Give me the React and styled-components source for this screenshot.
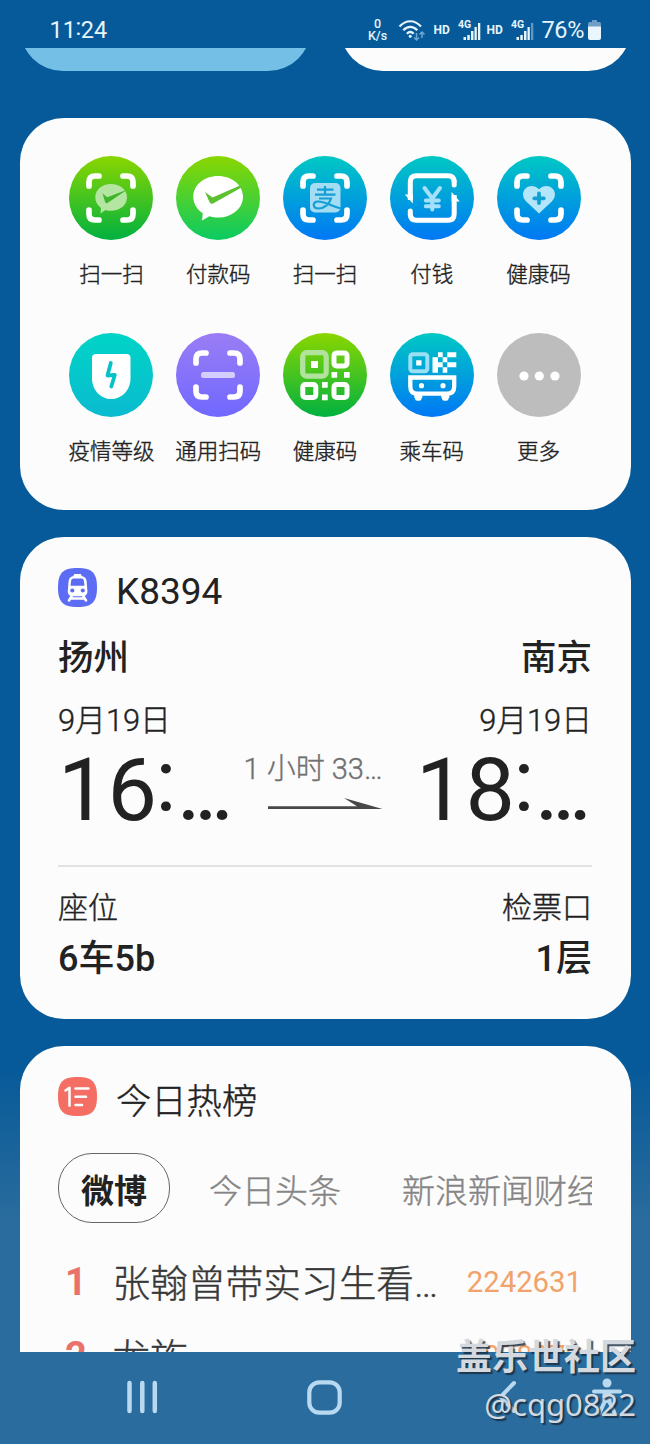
import styled, { createGlobalStyle, css } from 'styled-components';

const colors = {
  card: '#fcfcfc',
  text: '#222222',
  muted: '#858585',
  nav: '#b9d9f0',
};

// light text with a hairline outline, sits between light and regular
const softText = css`
  font-weight: 300;
  -webkit-text-stroke: 0.4px currentColor;
`;

const GlobalStyle = createGlobalStyle`
  * {
    box-sizing: border-box;
  }
  body {
    margin: 0;
    font-family: Roboto, 'Noto Sans CJK SC', sans-serif;
    color: ${colors.text};
  }
  svg {
    display: block;
    flex-shrink: 0;
  }
`;

const Screen = styled.div`
  position: relative;
  width: 650px;
  height: 1444px;
  display: flex;
  flex-direction: column;
  overflow: hidden;
  background: linear-gradient(#075a99 1070px, #2a6c9d 1220px);
`;

const StatusBar = styled.header`
  height: 48px;
  flex-shrink: 0;
  display: flex;
  align-items: center;
  justify-content: space-between;
  padding: 12px 49px 0 49.5px;
  color: #e6f5fc;
`;

const Clock = styled.span`
  font-size: 23.5px;
  line-height: 36px;
`;

const Colon = styled.span`
  line-height: 0;
  vertical-align: 0.11em;
  margin: 0 -0.02em;
`;

const StatusIcons = styled.div`
  display: flex;
  align-items: center;
`;

const Speed = styled.div`
  display: flex;
  flex-direction: column;
  align-items: center;
  width: 20px;
  margin-right: 10px;
  font-size: 12.5px;
  font-weight: 500;
  line-height: 12px;
`;

const Hd = styled.span`
  font-size: 12px;
  font-weight: 700;
  width: 17px;
  margin-left: ${({ $gap }) => $gap}px;
  margin-right: 7px;
`;

const Battery = styled.span`
  font-size: 23.5px;
  line-height: 36px;
  letter-spacing: -0.4px;
  margin: 0 4px 0 8px;
`;

const Feed = styled.main`
  height: 1304px;
  flex-shrink: 0;
  overflow: hidden;
  padding: 0 19.5px;
`;

const WidgetStrip = styled.div`
  height: 23px;
  overflow: hidden;
  display: flex;
  align-items: flex-end;
  justify-content: space-between;
`;

const Widget = styled.div`
  width: 291px;
  height: 120px;
  flex-shrink: 0;
  border-radius: 43px;
  background: ${({ $color }) => $color};
`;

const Card = styled.section`
  height: ${({ $height }) => $height}px;
  margin-top: ${({ $gap }) => $gap}px;
  padding: ${({ $top }) => $top}px 38.5px 0;
  border-radius: 44px;
  background: ${colors.card};
`;

const Shortcuts = styled.div`
  display: grid;
  grid-template-columns: repeat(5, 106.8px);
  grid-auto-rows: 177px;
  justify-content: center;
`;

const Shortcut = styled.div`
  display: flex;
  flex-direction: column;
  align-items: center;
  white-space: nowrap;
`;

const ShortcutLabel = styled.span`
  margin-top: 19px;
  font-size: 21.5px;
  line-height: 32px;
  ${softText}
`;

const CardHeader = styled.div`
  display: flex;
  align-items: center;
  gap: 19px;
  height: 40px;
`;

const CardTitle = styled.h2`
  margin: ${({ $drop }) => $drop}px 0 0;
  font-size: ${({ $size }) => $size}px;
  font-weight: 400;
  line-height: 40px;
  ${({ $soft }) => $soft && softText}
`;

const Row = styled.div`
  display: flex;
  align-items: center;
  justify-content: space-between;
  height: ${({ $height }) => $height}px;
  margin-top: ${({ $gap }) => $gap || 0}px;
`;

const Station = styled.span`
  font-size: 35.5px;
  font-weight: 500;
`;

const DateText = styled.span`
  font-size: 30.8px;
  ${softText}
`;

const Time = styled.span`
  font-size: 88px;
  line-height: 88px;
  width: 176px;
  white-space: nowrap;
`;

const Ellipsis = styled.span`
  margin-left: 3px;
  font-size: 77px;
  font-weight: 500;
  line-height: 0;
`;

const Duration = styled.div`
  display: flex;
  flex-direction: column;
  align-items: flex-end;
  gap: 9px;
  width: 165px;
  padding-right: 25px;
  margin-top: -22px;
  font-size: 29px;
  line-height: 40px;
  color: #707070;
  white-space: nowrap;
  ${softText}
`;

const Divider = styled.hr`
  height: 2px;
  margin: 31px 0 0;
  border: 0;
  background: #e2e2e2;
`;

const FieldLabel = styled.span`
  font-size: 30px;
  ${softText}
`;

const FieldValue = styled.span`
  font-size: 36px;
  font-weight: 500;
`;

const Tabs = styled.div`
  display: flex;
  align-items: center;
  height: 70px;
  margin-top: 37px;
  overflow: hidden;
  white-space: nowrap;
  font-size: 33px;
  color: ${colors.muted};
`;

const Tab = styled.span`
  flex-shrink: 0;
  margin-left: ${({ $gap }) => $gap}px;
  padding-top: 2px;
  ${softText}
`;

const ActiveTab = styled.span`
  display: flex;
  align-items: center;
  justify-content: center;
  flex-shrink: 0;
  width: 112px;
  height: 70px;
  padding-top: 2px;
  border: 1.5px solid #666;
  border-radius: 34px;
  font-weight: 700;
  color: ${colors.text};
`;

const HotList = styled.div`
  margin-top: 22px;
`;

const HotItem = styled.div`
  display: flex;
  align-items: center;
  height: 74px;
  white-space: nowrap;
`;

const Rank = styled.span`
  width: 36px;
  text-align: center;
  font-size: 38px;
  font-weight: 700;
  color: #e9736c;
`;

const HotTitle = styled.span`
  flex: 1;
  margin: -4px 0 0 18.5px;
  font-size: 37.7px;
  color: #383838;
  ${softText}
`;

const Heat = styled.span`
  margin: 0 10px 0 0;
  font-size: 29.3px;
  color: #f2a36b;
`;

const NavBar = styled.nav`
  height: 92px;
  flex-shrink: 0;
  display: flex;
  align-items: center;
  padding: 0 24px 2px 126px;
`;

const NavSlot = styled.div`
  margin-left: ${({ $gap }) => $gap}px;
`;

const Watermark = styled.div`
  position: absolute;
  right: 14px;
  bottom: 16px;
  display: flex;
  flex-direction: column;
  align-items: flex-end;
  color: #d3d9df;
  text-shadow: 2px 2px 1px rgba(25, 45, 65, 0.85);
  white-space: nowrap;
`;

const Community = styled.span`
  font-size: 36px;
  font-weight: 700;
  line-height: 44px;
`;

const Handle = styled.span`
  font-family: 'Noto Sans', sans-serif;
  font-size: 31px;
  line-height: 48px;
`;

const Wifi = () => (
  <svg width="28" height="24" viewBox="0 0 28 24" fill="none" stroke="#e6f5fc" strokeWidth="2.2">
    <path d="M1.5 8.5C8 1.5 16.500 1.500 23 8.500M5.300 12.300C9.600 7.800 15 7.800 19.300 12.300M8.800 15.700C11 13.500 13.500 13.500 15.700 15.700" />
    <circle cx="12.200" cy="18.300" r="1.500" fill="#e6f5fc" stroke="none" />
    <path stroke="#6fa6cf" strokeWidth="1.500" d="M18.500 15v7M16 19.500l2.500 2.500 2.500-2.500M24 20v-6M21.500 16.500l2.500-2.500 2.500 2.500" />
  </svg>
);

const Signal = ({ weak }) => (
  <svg width="23" height="22" viewBox="0 0 23 22" fill="#e6f5fc">
    <text x="0" y="9" fontSize="10.500" fontWeight="700">4G</text>
    <path d="M5.500 18h2.500v3h-2.500zM9.300 16h2.500v5h-2.500zM13 12h2.500v9h-2.500zM16.500 8h2.300v13h-2.300z" />
    <path d="M20 4h2.300v17h-2.300z" opacity={weak ? 0.4 : 1} />
  </svg>
);

const BatteryIcon = () => (
  <svg width="13" height="20" viewBox="0 0 13 20">
    <path fill="#6f9fc6" d="M4 0h5v2h2.500Q13 2 13 4v3H0V4Q0 2 1.500 2H4z" />
    <path fill="#e9f6ff" d="M0 6.500h13V18q0 2-2 2H2q-2 0-2-2z" />
  </svg>
);

const ScanFrame = () => (
  <path
    fill="none"
    stroke="#fff"
    strokeWidth="5.700"
    strokeLinecap="round"
    d="M20 30V26Q20 20 26 20h4M54 20H58q6 0 6 6v4M64 54V58q0 6-6 6h-4M30 64H26q-6 0-6-6v-4"
  />
);

const WechatScan = () => (
  <>
    <ScanFrame />
    <path
      fill="#b5e5a3"
      d="M42 28c9 0 16 5.500 16 13.300S51 54.800 42 54.800c-2 0-3.800-.3-5.500-.9L31.500 57.500 32 52C28.500 49.500 26.300 45.700 26.300 41.300 26.300 33.500 33 28 42 28z"
    />
    <path fill="#3fb52a" d="M33.500 37.500l4.800 3.800L58 33.800 38.500 47q-1.500 1-2.300-.8z" />
  </>
);

const WechatPay = () => (
  <>
    <path
      fill="#fff"
      d="M42 20c14 0 25 9 25 20.700S56 61.500 42 61.500c-3 0-6-.4-8.600-1.200L26 64.500l.8-7.300C21 53.500 17.300 47.500 17.300 40.700 17.300 29 28 20 42 20z"
    />
    <path fill="#5cc131" d="M29 36l7.500 5.500L64 29.500l1 2.200L37.500 47.200q-2.800 1.500-4-1.200z" />
  </>
);

const AlipayScan = () => (
  <>
    <ScanFrame />
    <rect x="27" y="27" width="30.500" height="29.500" rx="5" fill="#a3dcf3" />
    <path
      fill="none"
      stroke="#149ed6"
      strokeWidth="2.200"
      d="M34 33.700H50.500M32 38.700H52.500M42 30v8.500M36 42.500H48C46.500 48 41 52.500 35.500 52.500 29.500 52.500 29 45.500 35 45.500 42 45.500 48 50 58 52.500"
    />
  </>
);

const YenPay = () => (
  <>
    <g fill="none" stroke="#fff" strokeWidth="5" strokeLinecap="round">
      <path strokeLinecap="butt" d="M20.300 44V26q0-6.200 6.200-6.200H58q6.200 0 6.200 6.200" />
      <path d="M64.200 25v4" />
      <path strokeLinecap="butt" d="M64.200 39V58q0 6.200-6.200 6.200H26.500q-6.200 0-6.200-6.200" />
      <path d="M20.300 58.500V55" />
    </g>
    <path fill="#fff" d="M14.800 38.500l8 9V38.500zM69.800 45.500l-8.200-9.500v9.500z" />
    <path
      fill="none"
      stroke="#a5e0fa"
      strokeWidth="4"
      strokeLinecap="round"
      d="M34.500 32L42.300 42.500 50 32M42.300 42.500V53.500M35.800 44.500H48.800M35.800 50.300H48.800"
    />
  </>
);

const HealthScan = () => (
  <>
    <ScanFrame />
    <path
      fill="#b3e6f8"
      d="M42 57.500L29.200 45.500C25.500 42 25 36.500 28 33c3.500-4.300 10-4 14 .3 4-4.300 10.500-4.600 14-.3 3 3.500 2.500 9-1.200 12.500z"
    />
    <path stroke="#129fd2" strokeWidth="3.800" strokeLinecap="round" d="M42 37.500v9.500M37.300 42.300h9.500" />
  </>
);

const Shield = () => (
  <>
    <path fill="#fff" d="M27 21h30.500q4 0 4 4v20C61.500 58 52 66 42.200 66S23 58 23 45V25q0-4 4-4z" />
    <path
      fill="none"
      stroke="#06c2c8"
      strokeWidth="3.800"
      strokeLinecap="round"
      strokeLinejoin="round"
      d="M41.800 30L38.500 42.500 45.800 42 42.300 53.500"
    />
  </>
);

const LineScan = () => (
  <>
    <ScanFrame />
    <rect x="25" y="39" width="34" height="6" rx="2.500" fill="#d4cdfd" />
  </>
);

const QrCode = () => (
  <>
    <rect x="19.700" y="19.700" width="23.500" height="23.500" rx="4" fill="none" stroke="#b2e39d" strokeWidth="5.200" />
    <g fill="none" stroke="#fff" strokeWidth="5">
      <rect x="51" y="20" width="13" height="13" rx="2.500" />
      <rect x="19.800" y="51.500" width="13" height="13" rx="2.500" />
      <rect x="51" y="51.500" width="13" height="13" rx="2.500" />
    </g>
    <path
      fill="#fff"
      d="M28 28h7v7h-7zM48.500 39h5.700v5.700h-5.700zM61 39h5.700v5.700h-5.700zM39 49h5.700v5.700H39zM39 61.500h5.700v5.700H39z"
    />
  </>
);

const Bus = () => (
  <>
    <rect x="20.300" y="21.300" width="17" height="17" rx="2.500" fill="none" stroke="#9adff2" strokeWidth="4" />
    <path
      fill="#fff"
      d="M26.200 27.300h5.300v5.300h-5.300zM42.500 24.300h5.500v15.400h-5.500zM48 19.300h4.700v5H48zM57.300 19.300h9v5h-9zM52.700 24.300h4.600v5h-4.600zM48 29.300h4.700v5H48zM57.300 29.300h9v5h-9zM52.700 34.300h4.600v5.400h-4.600z"
    />
    <path
      fill="none"
      stroke="#fff"
      strokeWidth="4.300"
      d="M20.300 44.500H64.200V53.500Q64.200 60.700 57 60.700H27.500Q20.300 60.700 20.300 53.500z"
    />
    <circle cx="31.500" cy="52.700" r="2.600" fill="#fff" />
    <circle cx="53" cy="52.700" r="2.600" fill="#fff" />
    <path stroke="#fff" strokeWidth="8" d="M28.300 62v3M55.300 62v3" />
    <path stroke="#fff" strokeWidth="5" strokeLinecap="round" d="M27.500 65.300h1.600M54.500 65.300h1.600" />
  </>
);

const More = () => (
  <g fill="#fff">
    <circle cx="27" cy="43" r="4.600" />
    <circle cx="42.300" cy="43" r="4.600" />
    <circle cx="58" cy="43" r="4.600" />
  </g>
);

const SHORTCUTS = [
  { label: '扫一扫', from: '#8ad600', to: '#00b140', Glyph: WechatScan },
  { label: '付款码', from: '#8ad600', to: '#0acb63', Glyph: WechatPay },
  { label: '扫一扫', from: '#00c8c3', to: '#0078f5', Glyph: AlipayScan },
  { label: '付钱', from: '#00c8c3', to: '#0078f5', Glyph: YenPay },
  { label: '健康码', from: '#00c8c3', to: '#0078f5', Glyph: HealthScan },
  { label: '疫情等级', from: '#00d4c6', to: '#0abbd0', Glyph: Shield },
  { label: '通用扫码', from: '#9a7df5', to: '#7068ff', Glyph: LineScan },
  { label: '健康码', from: '#8ad600', to: '#00b140', Glyph: QrCode },
  { label: '乘车码', from: '#00c8c3', to: '#0078f5', Glyph: Bus },
  { label: '更多', from: '#bdbdbd', to: '#bdbdbd', Glyph: More },
];

const ShortcutIcon = ({ id, from, to, children }) => (
  <svg width="84" height="84" viewBox="0 0 84 84">
    <defs>
      <linearGradient id={id} x1="0" y1="0" x2="0" y2="1">
        <stop offset="0" stopColor={from} />
        <stop offset="1" stopColor={to} />
      </linearGradient>
    </defs>
    <circle cx="42" cy="42" r="42" fill={`url(#${id})`} />
    {children}
  </svg>
);

const TrainIcon = () => (
  <svg width="39" height="39" viewBox="0 0 39 39">
    <path fill="#5c6cf5" d="M19.500 0C34 0 39 5 39 19.500S34 39 19.500 39 0 34 0 19.500 5 0 19.500 0z" />
    <path
      fill="#fff"
      d="M16.300 6h6.500l1 2c3 .6 4.500 2.500 4.800 5l.8 10c.2 3.300-1.700 5.200-4.500 5.200H14.300c-2.800 0-4.700-1.900-4.500-5.200l.8-10c.3-2.500 1.800-4.400 4.700-5z"
    />
    <path fill="#5c6cf5" d="M15.500 10.500h8q2 0 2.300 2l.7 5.300h-14l.7-5.300q.3-2 2.300-2z" />
    <circle cx="14.300" cy="22.500" r="2.100" fill="#5c6cf5" />
    <circle cx="24.800" cy="22.500" r="2.100" fill="#5c6cf5" />
    <path fill="none" stroke="#fff" strokeWidth="2.600" strokeLinecap="round" d="M13.500 28.500l-2.500 4M25.500 28.500l2.500 4M13.500 30.500h12" />
  </svg>
);

const HotIcon = () => (
  <svg width="39" height="39" viewBox="0 0 39 39">
    <path fill="#f46e63" d="M19.500 0C34 0 39 5 39 19.500S34 39 19.500 39 0 34 0 19.500 5 0 19.500 0z" />
    <path
      fill="none"
      stroke="#fff"
      strokeWidth="2.500"
      strokeLinecap="round"
      strokeLinejoin="round"
      d="M7.500 13.500l4-2.700v18M17.500 11.500H30.500M17.500 19.800H28M17.500 28H24"
    />
  </svg>
);

const Arrow = () => (
  <svg width="116" height="12" viewBox="0 0 116 12" fill="#484848">
    <path d="M1 8.300h89L77 0l38.500 11H1z" />
  </svg>
);

const RecentsIcon = () => (
  <svg width="32" height="34" viewBox="0 0 32 34" stroke={colors.nav} strokeWidth="4.500" strokeLinecap="round">
    <path d="M3.500 3v28M16.300 3v28M28.800 3v28" />
  </svg>
);

const HomeIcon = () => (
  <svg width="35" height="35" viewBox="0 0 35 35">
    <rect x="2.300" y="2.300" width="30.400" height="30.400" rx="10" fill="none" stroke={colors.nav} strokeWidth="4.200" />
  </svg>
);

const BackIcon = () => (
  <svg width="20" height="34" viewBox="0 0 20 34" fill="none" stroke={colors.nav} strokeWidth="4" strokeLinecap="round">
    <path d="M17 3L3.500 17 17 31" />
  </svg>
);

const AccessibilityIcon = () => (
  <svg width="32" height="38" viewBox="0 0 32 38" stroke={colors.nav} strokeLinecap="round">
    <circle cx="16" cy="5" r="4.500" fill={colors.nav} stroke="none" />
    <path fill="none" strokeWidth="4" d="M3 13.500h26M16 14v9M13.500 15v9L8.500 35M18.500 15v9l5 11" />
  </svg>
);

const HOT_LIST = [
  { title: '张翰曾带实习生看…', heat: '2242631' },
  { title: '龙族', heat: '2078272' },
];

export default function App() {
  return (
    <Screen>
      <GlobalStyle />
      <StatusBar>
        <Clock>
          11<Colon>:</Colon>24
        </Clock>
        <StatusIcons>
          <Speed>
            <span>0</span>
            <span>K/s</span>
          </Speed>
          <Wifi />
          <Hd $gap={8}>HD</Hd>
          <Signal />
          <Hd $gap={6}>HD</Hd>
          <Signal weak />
          <Battery>76%</Battery>
          <BatteryIcon />
        </StatusIcons>
      </StatusBar>

      <Feed>
        <WidgetStrip>
          <Widget $color="#73bfe6" />
          <Widget $color={colors.card} />
        </WidgetStrip>

        <Card $height={392.5} $gap={46.5} $top={38.5}>
          <Shortcuts>
            {SHORTCUTS.map(({ label, from, to, Glyph }, i) => (
              <Shortcut key={i}>
                <ShortcutIcon id={`shortcut-${i}`} from={from} to={to}>
                  <Glyph />
                </ShortcutIcon>
                <ShortcutLabel>{label}</ShortcutLabel>
              </Shortcut>
            ))}
          </Shortcuts>
        </Card>

        <Card $height={482} $gap={27} $top={30}>
          <CardHeader>
            <TrainIcon />
            <CardTitle $size={37} $drop={10}>
              K8394
            </CardTitle>
          </CardHeader>
          <Row $height={60} $gap={17}>
            <Station>扬州</Station>
            <Station>南京</Station>
          </Row>
          <Row $height={60} $gap={3}>
            <DateText>9月19日</DateText>
            <DateText>9月19日</DateText>
          </Row>
          <Row $height={88} $gap={-1}>
            <Time>
              16<Colon>:</Colon>
              <Ellipsis>…</Ellipsis>
            </Time>
            <Duration>
              1 小时 33…
              <Arrow />
            </Duration>
            <Time>
              18<Colon>:</Colon>
              <Ellipsis>…</Ellipsis>
            </Time>
          </Row>
          <Divider />
          <Row $height={44} $gap={16}>
            <FieldLabel>座位</FieldLabel>
            <FieldLabel>检票口</FieldLabel>
          </Row>
          <Row $height={50} $gap={3}>
            <FieldValue>6车5b</FieldValue>
            <FieldValue>1层</FieldValue>
          </Row>
        </Card>

        <Card $height={460} $gap={27} $top={30}>
          <CardHeader>
            <HotIcon />
            <CardTitle $size={35.3} $drop={12} $soft>
              今日热榜
            </CardTitle>
          </CardHeader>
          <Tabs>
            <ActiveTab>微博</ActiveTab>
            <Tab $gap={39}>今日头条</Tab>
            <Tab $gap={61}>新浪新闻财经</Tab>
          </Tabs>
          <HotList>
            {HOT_LIST.map(({ title, heat }, i) => (
              <HotItem key={title}>
                <Rank>{i + 1}</Rank>
                <HotTitle>{title}</HotTitle>
                <Heat>{heat}</Heat>
              </HotItem>
            ))}
          </HotList>
        </Card>
      </Feed>

      <NavBar>
        <RecentsIcon />
        <NavSlot $gap={149}>
          <HomeIcon />
        </NavSlot>
        <NavSlot $gap={155}>
          <BackIcon />
        </NavSlot>
        <NavSlot $gap={74}>
          <AccessibilityIcon />
        </NavSlot>
      </NavBar>

      <Watermark>
        <Community>盖乐世社区</Community>
        <Handle>@cqg0822</Handle>
      </Watermark>
    </Screen>
  );
}
